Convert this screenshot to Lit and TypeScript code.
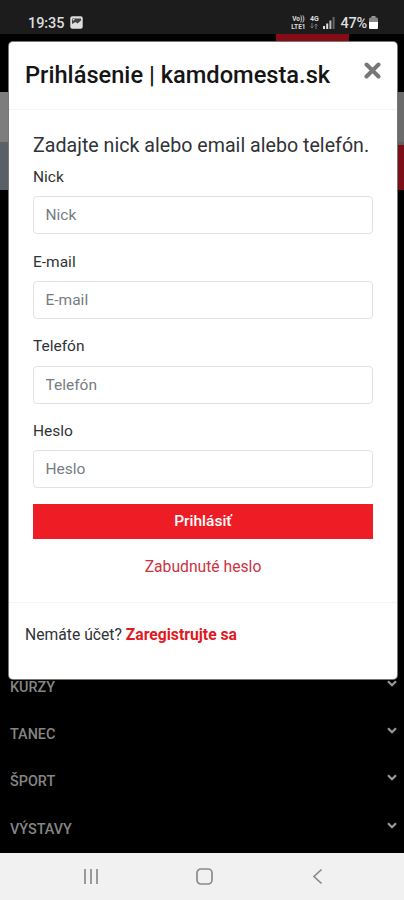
import { LitElement, html, css, svg } from "lit";
import { customElement, property } from "lit/decorators.js";

@customElement("status-bar")
class StatusBar extends LitElement {
  static styles = css`
    :host { display: flex; flex: none; height: 34px; box-sizing: border-box; padding: 13px 26px 0 28px; background: #1c1c1c; color: #dedede; font: 500 14.5px/22px Roboto, sans-serif; justify-content: space-between; }
    .group { display: flex; align-items: flex-start; }
    .photo { margin: 3px 0 0 6px; }
    .volte { font: 700 6.500px/8px Roboto, sans-serif; width: 16px; text-align: center; margin-top: 2px; }
    .volte span { display: block; white-space: nowrap; }
    .net { margin: 2px 0 0 3px; font: 700 7px/8px Roboto, sans-serif; width: 10px; text-align: center; }
    .net svg { display: block; margin: 0 auto; }
    .signal { margin: 4px 5px 0 4px; }
    .battery { margin: 3px 0 0 2px; }
    .time { letter-spacing: -0.1px; }
    .percent { letter-spacing: -0.2px; }
  `;
  render() {
    return html`
      <div class="group">
        <span class="time">19:35</span>
        <svg class="photo" width="13" height="13" viewBox="0 0 13 13">
          <rect x=".3" y=".3" width="12.4" height="12.4" rx="2" fill="#dedede" />
          <path d="M2 2.500h9v2L7.500 7.500 5.500 6 2 8z" fill="#444" /><path d="M2.500 3h2.500L3 5z" fill="#dedede" />
        </svg>
      </div>
      <div class="group">
        <div class="volte"><span>Vo))</span><span>LTE1</span></div>
        <div class="net">4G
          <svg width="8" height="6" viewBox="0 0 8 6" fill="none" stroke="#777" stroke-width="1"><path d="M2 0v5M.5 3.500L2 5l1.500-1.500M6 6V1M4.500 2.500L6 1l1.500 1.500" /></svg>
        </div>
        <svg class="signal" width="12" height="12" viewBox="0 0 12 12"><path d="M0 9h2v3H0zM3.200 6.500h2V12h-2z" fill="#ddd" /><path d="M6.400 3.500h2V12h-2z" fill="#bbb" /><path d="M9.600 0h2v12h-2z" fill="#666" /></svg>
        <span class="percent">47%</span>
        <svg class="battery" width="9" height="13" viewBox="0 0 9 13"><path d="M2.500 0h4v2h-4z" fill="#999" /><rect y="1.500" width="9" height="11.500" rx="1.500" fill="#888" /><path d="M0 6h9v5.500Q9 13 7.500 13h-6Q0 13 0 11.500z" fill="#fff" /></svg>
      </div>`;
  }
}

@customElement("form-field")
class FormField extends LitElement {
  @property() label = "";
  static styles = css`
    :host { display: block; height: 84.700px; font: 400 15.500px/22px Roboto, sans-serif; color: #303336; }
    .label { display: block; height: 30.200px; }
    .input { display: block; box-sizing: border-box; width: 340px; height: 38px; border: 1px solid #dfe2e5; border-radius: 4px; padding: 0 12px 0 11.500px; font: inherit; outline: none; background: #fff; }
    .input::placeholder { color: #767c82; opacity: 1; }
  `;
  render() {
    return html`<label class="label">${this.label}</label><input class="input" placeholder=${this.label} />`;
  }
}

@customElement("login-dialog")
class LoginDialog extends LitElement {
  static styles = css`
    :host { display: flex; flex-direction: column; box-sizing: border-box; width: 388px; height: 636.500px; background: #fff; border-radius: 4px; box-shadow: 0 0 0 1px #777; font-family: Roboto, sans-serif; color: #303336; }
    .header { display: flex; justify-content: space-between; box-sizing: border-box; height: 68px; padding: 19px 16px 0 16px; border-bottom: 1px solid #f3f4f5; }
    .title { margin: 0; font: 500 23.650px/28px Roboto, sans-serif; color: #151515; white-space: nowrap; }
    .close { margin-top: 1px; }
    .body { box-sizing: border-box; height: 493px; padding: 23px 24px; border-bottom: 1px solid #f3f4f5; }
    .lead { margin: 0; height: 33px; font: 400 19.600px/25px Roboto, sans-serif; white-space: nowrap; letter-spacing: 0.020px; }
    .submit { display: block; width: 340px; height: 35.500px; margin-top: -1px; padding: 0; border: 0; background: #ee1c25; color: #fff; font: 500 15.500px/35px Roboto, sans-serif; }
    .forgot { margin-top: 16.500px; text-align: center; color: #cb333f; font-size: 15.700px; line-height: 22px; }
    .footer { padding: 21px 16px; font-size: 15.700px; line-height: 22px; }
    .register { color: #e11923; font-weight: 700; }
  `;
  render() {
    return html`
      <div class="header">
        <h1 class="title">Prihlásenie | kamdomesta.sk</h1>
        <svg class="close" width="17" height="17" viewBox="0 0 17 17" stroke="#777" stroke-width="4" stroke-linecap="round"><path d="M2.500 2.500l12 12M14.500 2.500l-12 12" /></svg>
      </div>
      <div class="body">
        <h2 class="lead">Zadajte nick alebo email alebo telefón.</h2>
        ${["Nick", "E-mail", "Telefón", "Heslo"].map((l) => html`<form-field label=${l}></form-field>`)}
        <button class="submit">Prihlásiť</button>
        <div class="forgot">Zabudnuté heslo</div>
      </div>
      <div class="footer">Nemáte účet? <span class="register">Zaregistrujte sa</span></div>`;
  }
}

@customElement("app-root")
class AppRoot extends LitElement {
  static styles = css`
    :host { display: flex; flex-direction: column; position: relative; width: 404px; height: 900px; overflow: hidden; background: #000; font-family: Roboto, sans-serif; }
    .page { flex: 1; display: flex; flex-direction: column; min-height: 0; overflow: hidden; }
    .page > * { flex: none; }
    .tab { width: 73px; height: 8px; margin-left: 275.500px; background: #850b14; }
    .bar { height: 50px; margin-top: 50px; background: linear-gradient(90deg, #7d7d7d 50%, #6b6b6b 50%); }
    .hero { display: flex; justify-content: space-between; height: 48px; background: #596067; border-top: 3px solid #606060; box-sizing: border-box; }
    .accent { width: 20px; background: #7c0e17; }
    .menu { display: flex; flex-direction: column; margin-top: 487px; }
    .item { display: flex; justify-content: space-between; flex: none; height: 47.200px; padding: 0 7px 0 10px; color: #858585; font: 500 14.400px/22px Roboto, sans-serif; }
    .chevron { margin-top: 3px; }
    .dialog { position: absolute; left: 9px; top: 42px; }
    .nav { display: flex; flex: none; justify-content: space-between; align-items: center; box-sizing: border-box; height: 47px; padding: 0 78px 0 82px; background: #f1f1f1; }
  `;
  render() {
    const icon = (paths: unknown) => html`<svg width="17" height="17" viewBox="0 0 17 17" fill="none" stroke="#8a8a8a" stroke-width="1.700">${paths}</svg>`;
    return html`
      <status-bar></status-bar>
      <div class="page">
        <div class="tab"></div>
        <div class="bar"></div>
        <div class="hero"><span></span><span class="accent"></span></div>
        <div class="menu">
          ${["KURZY", "TANEC", "ŠPORT", "VÝSTAVY"].map((t) => html`<div class="item"><span>${t}</span>
            <svg class="chevron" width="10" height="7" viewBox="0 0 10 7" fill="none" stroke="#999" stroke-width="2.200"><path d="M1 1.200l4 4 4-4" /></svg></div>`)}
        </div>
      </div>
      <div class="nav">
        ${icon(svg`<path d="M3 1v15M9 1v15M15 1v15" />`)}
        ${icon(svg`<rect x="1" y="1" width="15" height="15" rx="4" />`)}
        ${icon(svg`<path d="M12.500 1.500L5 8.500l7.500 7" />`)}
      </div>
      <login-dialog class="dialog"></login-dialog>`;
  }
}
